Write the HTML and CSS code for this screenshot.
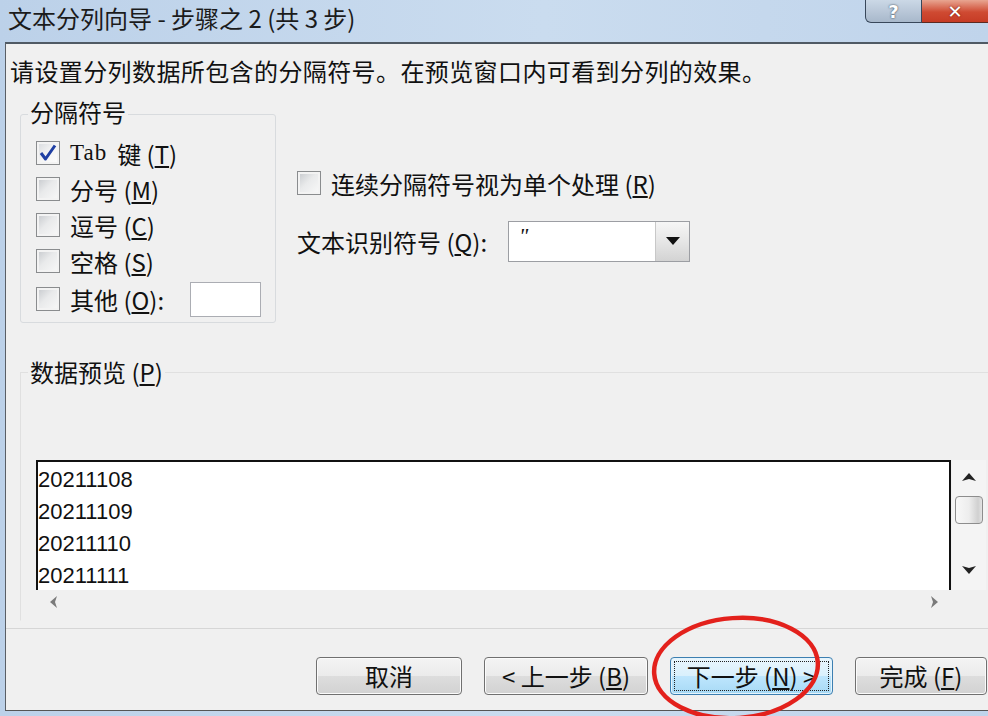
FILE: index.html
```html
<!DOCTYPE html>
<html lang="zh-CN">
<head>
    <meta charset="UTF-8">
    <meta name="viewport" content="width=device-width, initial-scale=1.0">
    <title>文本分列向导 - 步骤之 2 (共 3 步)</title>
    <link rel="stylesheet" href="styles.css">
</head>
<body>
    <div class="window">
        <div class="titlebar">
            <span class="title">文本分列向导 - 步骤之 2 (共 3 步)</span>
            <div class="caption-buttons">
                <span class="cap-btn help">?</span>
                <span class="cap-btn close">✕</span>
            </div>
        </div>

        <div class="frame">
            <p class="intro">请设置分列数据所包含的分隔符号。在预览窗口内可看到分列的效果。</p>

            <div class="options">
                <fieldset class="group delimiters">
                    <legend>分隔符号</legend>
                    <div class="row">
                        <span class="check checked">
                            <svg width="22" height="22" viewBox="0 0 22 22"><path d="M4 11 L8.5 17 L18 3.5" fill="none" stroke="#1f3fa3" stroke-width="3" stroke-linejoin="round"/></svg>
                        </span>
                        <span class="mono">Tab</span>
                        <span class="text">键 (<u>T</u>)</span>
                    </div>
                    <div class="row">
                        <span class="check"></span>
                        <span class="text">分号 (<u>M</u>)</span>
                    </div>
                    <div class="row">
                        <span class="check"></span>
                        <span class="text">逗号 (<u>C</u>)</span>
                    </div>
                    <div class="row">
                        <span class="check"></span>
                        <span class="text">空格 (<u>S</u>)</span>
                    </div>
                    <div class="row tall">
                        <span class="check"></span>
                        <span class="text">其他 (<u>O</u>):</span>
                        <span class="field"></span>
                    </div>
                </fieldset>

                <div class="side">
                    <div class="row">
                        <span class="check"></span>
                        <span class="text">连续分隔符号视为单个处理 (<u>R</u>)</span>
                    </div>
                    <div class="row qualifier">
                        <span class="text">文本识别符号 (<u>Q</u>):</span>
                        <div class="combo">
                            <span class="combo-value">"</span>
                            <span class="combo-btn">
                                <svg width="14" height="8" viewBox="0 0 14 8"><polygon points="0,0 14,0 7,8" fill="#111"/></svg>
                            </span>
                        </div>
                    </div>
                </div>
            </div>

            <fieldset class="group preview-group">
                <legend>数据预览 (<u>P</u>)</legend>
                <div class="preview">
                    <div class="grid">
                        <div>20211108</div>
                        <div>20211109</div>
                        <div>20211110</div>
                        <div>20211111</div>
                    </div>
                    <div class="vscroll">
                        <span class="arrow-box">
                            <svg width="14" height="8" viewBox="0 0 14 8"><polygon points="0,8 7,0 14,8 7,6" fill="#222"/></svg>
                        </span>
                        <span class="thumb"></span>
                        <span class="spacer"></span>
                        <span class="arrow-box down">
                            <svg width="14" height="8" viewBox="0 0 14 8"><polygon points="0,0 7,2 14,0 7,8" fill="#222"/></svg>
                        </span>
                    </div>
                </div>
                <div class="hscroll">
                    <svg width="7" height="12" viewBox="0 0 7 12"><polygon points="7,0 0,6 7,12 5,6" fill="#7a7a7a"/></svg>
                    <svg width="7" height="12" viewBox="0 0 7 12"><polygon points="0,0 7,6 0,12 2,6" fill="#7a7a7a"/></svg>
                </div>
            </fieldset>

            <div class="buttons">
                <button class="btn cancel">取消</button>
                <button class="btn back">&lt; 上一步 (<u>B</u>)</button>
                <button class="btn next">下一步 (<u>N</u>) &gt;</button>
                <button class="btn finish">完成 (<u>F</u>)</button>
            </div>
        </div>
    </div>

    <svg class="mark" width="176" height="110" viewBox="0 0 176 110">
        <ellipse cx="86" cy="56" rx="82" ry="50" transform="rotate(-4 86 56)" fill="none" stroke="#e3211c" stroke-width="4.5"/>
    </svg>
</body>
</html>
```

FILE: styles.css
```css
body {
    margin: 0;
    width: 988px;
    height: 716px;
    overflow: hidden;
    position: relative;
    font-family: "Noto Sans CJK SC", sans-serif;
    font-size: 24px;
    color: #111;
}

.window {
    display: flex;
    flex-direction: column;
    height: 716px;
    background: linear-gradient(to right, #bcd1e9, #cadcef 55%, #c0d4eb);
}

.titlebar {
    height: 42px;
    flex: none;
    display: flex;
    justify-content: space-between;
    align-items: flex-start;
}

.title {
    padding-left: 8px;
    line-height: 35px;
    font-size: 24px;
    color: #1b1b1b;
}

.caption-buttons {
    display: flex;
}

.cap-btn {
    height: 22px;
    display: flex;
    align-items: center;
    justify-content: center;
    color: #fff;
    font-family: "DejaVu Sans", sans-serif;
    font-weight: bold;
    font-size: 18px;
}

.help {
    width: 55px;
    background: linear-gradient(#cbd8e6, #a8b8cb);
    border: 1px solid #38475a;
    border-top: none;
    border-radius: 0 0 0 6px;
    text-shadow: 0 0 2px #1f2b38;
}

.close {
    width: 66px;
    background: linear-gradient(#e8a591, #cf4a32 55%, #c63b25);
    border-bottom: 1px solid #5b2a22;
    text-shadow: 0 0 2px #6a1c10;
}

.frame {
    flex: 1;
    margin: 0 0 5px 5px;
    border-top: 2px solid #505a64;
    border-left: 1px solid #5a5f66;
    border-bottom: 1px solid #555;
    background: #f0f0f0;
    overflow: hidden;
}

.intro {
    margin: 13px 0 0 4px;
    line-height: 28px;
    letter-spacing: 0.4px;
}

.options {
    display: flex;
    align-items: flex-start;
    gap: 21px;
    margin-top: 14px;
}

.group {
    margin: 0;
    border: 1px solid #d8dbde;
    border-radius: 3px;
    min-inline-size: 0;
}

.group legend {
    padding: 0 2px;
    margin-left: -8px;
    line-height: 26px;
}

.delimiters {
    width: 256px;
    box-sizing: border-box;
    margin-left: 14px;
    padding: 6px 14px 3px 15px;
}

.delimiters legend {
    padding-bottom: 4px;
}

.row {
    display: flex;
    align-items: center;
    gap: 10px;
    height: 36px;
    white-space: nowrap;
}

.row.tall {
    height: 40px;
}

u {
    text-underline-offset: 2px;
}

.check {
    width: 24px;
    height: 24px;
    box-sizing: border-box;
    flex: none;
    border: 1px solid #8a8c8e;
    background: linear-gradient(135deg, #c4c7cb, #e9eaeb 45%, #f9f9f9);
    box-shadow: inset 0 0 0 2px #f3f3f3;
    display: flex;
    align-items: center;
    justify-content: center;
}

.check.checked {
    background: linear-gradient(135deg, #d6d9dd, #f4f4f4 50%, #fdfdfd);
}

.mono {
    font-family: "Liberation Serif", serif;
    font-size: 23px;
    letter-spacing: 1px;
}

.field {
    margin-left: auto;
    width: 71px;
    height: 35px;
    box-sizing: border-box;
    border: 1px solid #abadb3;
    background: #fff;
}

.side {
    padding-top: 66px;
    display: flex;
    flex-direction: column;
    gap: 19px;
}

.qualifier {
    height: 42px;
    gap: 0;
}

.qualifier .text {
    width: 211px;
}

.combo {
    width: 182px;
    height: 41px;
    box-sizing: border-box;
    border: 1px solid #9c9ea3;
    background: #fff;
    display: flex;
}

.combo-value {
    flex: 1;
    padding-left: 10px;
    font-family: "Liberation Serif", serif;
    font-style: italic;
    font-size: 22px;
    line-height: 28px;
}

.combo-btn {
    width: 33px;
    border-left: 1px solid #c8c8c8;
    background: linear-gradient(#f6f6f6, #e6e6e6 50%, #d3d3d3);
    display: flex;
    align-items: center;
    justify-content: center;
}

.preview-group {
    margin: 36px -40px 0 14px;
    padding: 75px 0 6px 15px;
    border-color: #e0e0e0;
    border-bottom-color: transparent;
    border-radius: 0;
}

.preview {
    display: flex;
}

.grid {
    width: 915px;
    height: 130px;
    box-sizing: border-box;
    border: 2px solid #111;
    border-bottom: none;
    background: #fff;
    padding-top: 2px;
    font-family: "Liberation Sans", Arial, sans-serif;
    font-size: 22px;
    line-height: 32px;
}

.vscroll {
    width: 34px;
    height: 130px;
    margin-left: 1px;
    display: flex;
    flex-direction: column;
    align-items: center;
    background: #f4f4f4;
}

.arrow-box {
    height: 34px;
    display: flex;
    align-items: center;
    justify-content: center;
}

.arrow-box.down {
    margin-bottom: 3px;
}

.thumb {
    width: 28px;
    height: 28px;
    box-sizing: border-box;
    margin-top: 2px;
    border: 1px solid #8d8d8d;
    border-radius: 4px;
    background: linear-gradient(to right, #f8f8f8, #ededed 50%, #d0d0d0 85%, #e4e4e4);
}

.spacer {
    flex: 1;
}

.hscroll {
    width: 915px;
    height: 24px;
    box-sizing: border-box;
    padding: 0 13px 0 14px;
    display: flex;
    justify-content: space-between;
    align-items: center;
}

.buttons {
    margin-top: 7px;
    padding: 28px 1px 0 0;
    border-top: 1px solid #d6d6d6;
    display: flex;
    justify-content: flex-end;
    gap: 22px;
}

.btn {
    height: 38px;
    box-sizing: border-box;
    padding: 0;
    border: 1px solid #707070;
    border-radius: 4px;
    background: linear-gradient(#f4f4f4, #ebebeb 50%, #dddddd 51%, #d2d2d2);
    box-shadow: inset 0 0 0 1px #fbfbfb;
    font: inherit;
    line-height: 34px;
    color: #111;
    text-align: center;
    white-space: nowrap;
}

.cancel { width: 146px; }
.back { width: 164px; }
.finish { width: 132px; }

.next {
    width: 163px;
    border-color: #3c7fb1;
    background: linear-gradient(#eaf6fd, #d9f0fc 50%, #bee6fd 51%, #a7d9f5);
    box-shadow: inset 0 0 0 1px #e6f4fc;
    outline: 1px dotted #222;
    outline-offset: -5px;
}

.mark {
    position: absolute;
    left: 650px;
    top: 612px;
}
```
